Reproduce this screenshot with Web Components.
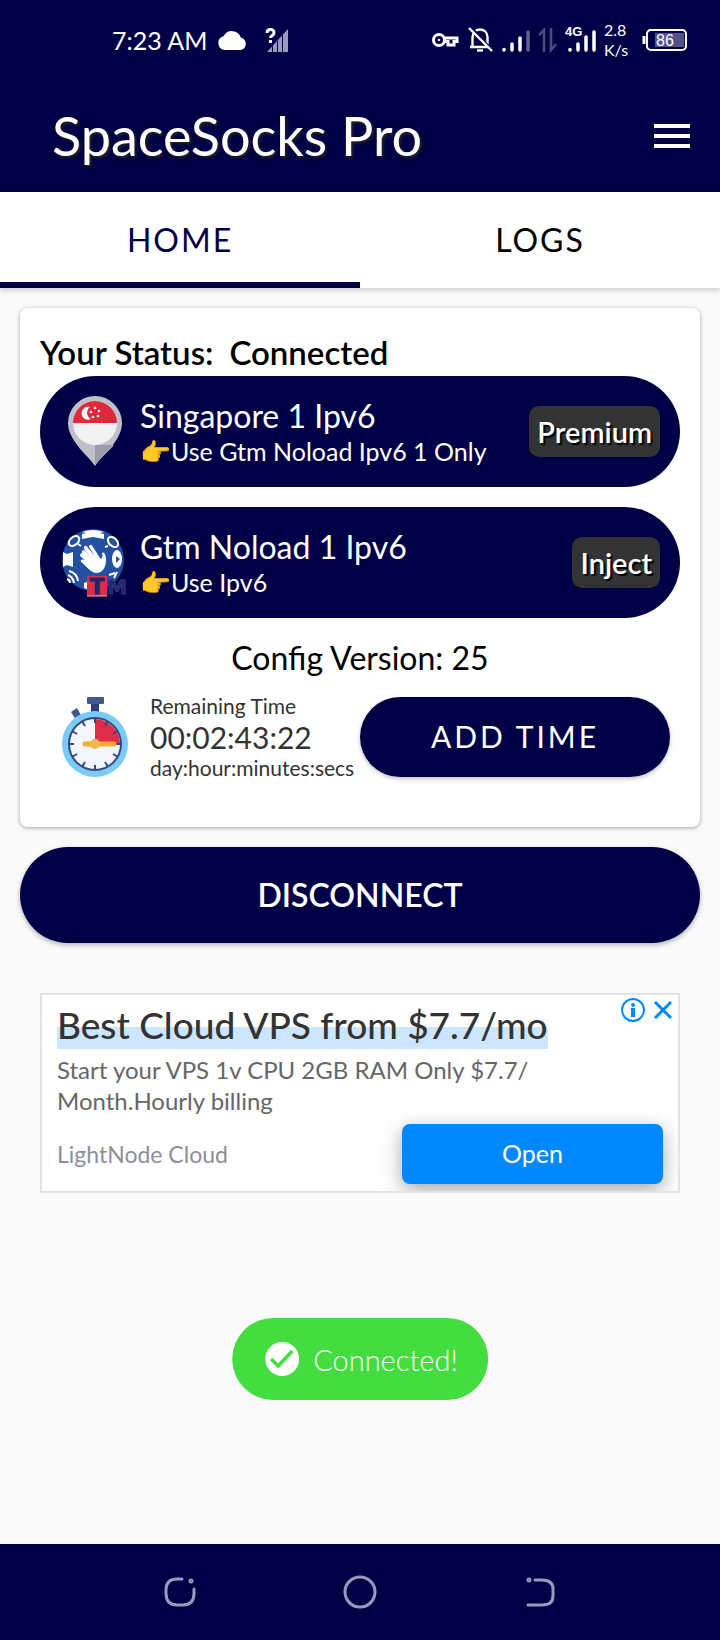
<!DOCTYPE html>
<html lang="en">
<head>
<meta charset="utf-8">
<meta name="viewport" content="width=device-width, initial-scale=1">
<title>SpaceSocks Pro</title>
<style>
    :root {
        --navy: #000047;
        --page: #fafafa;
    }
    body {
        margin: 0;
        background: var(--page);
        font-family: Lato, "Open Sans", sans-serif;
        color: #000;
    }
</style>
</head>
<body>
<space-app></space-app>

<script>
// Shared by every component: open shadow root filled from a markup string
class BaseElement extends HTMLElement {
    connectedCallback() {
        if (this.shadowRoot) return;
        this.attachShadow({ mode: 'open' });
        this.shadowRoot.innerHTML = this.template();
    }
}

// Android status bar
class PhoneStatus extends BaseElement {
    template() {
        return `
            <style>
                :host {
                    display: flex;
                    align-items: center;
                    justify-content: space-between;
                    height: 80px;
                    padding: 0 32px 0 112px;
                    background: var(--navy);
                    color: #fff;
                }
                .side { display: flex; align-items: center; }
                .time { font-size: 25px; margin-right: 10px; }
                .cloud { margin-right: 18px; }
                .right { gap: 7px; }
                .rate { font-size: 16px; line-height: 20px; width: 31px; }
                svg { display: block; }
                svg text { font-family: "Liberation Sans", sans-serif; }
            </style>
            <div class="side">
                <span class="time">7:23 AM</span>
                <svg class="cloud" width="30" height="22" viewBox="0 0 30 22" fill="#fff"><path d="M7.500 21A7 7 0 0 1 6.500 7.300A9.500 9.500 0 0 1 24 8.700A6.300 6.300 0 0 1 23.700 21Z"/></svg>
                <svg width="26" height="26" viewBox="0 0 26 26">
                    <path d="M2 25L23 2V25Z" fill="#9a9ac0"/>
                    <path d="M7.500 19V25M12.500 14V25M17.500 8V25" stroke="#000047"/>
                    <path d="M2 6C2 1.500 9 1.500 9 5.500C9 9 5.500 8.500 5.500 12M5.500 14V17" fill="none" stroke="#000047" stroke-width="6"/>
                    <path d="M2 6C2 1.500 9 1.500 9 5.500C9 9 5.500 8.500 5.500 11M5.500 13V16" fill="none" stroke="#fff" stroke-width="3"/>
                </svg>
            </div>
            <div class="side right">
                <svg width="28" height="16" viewBox="0 0 28 16" fill="none" stroke="#fff" stroke-width="3"><circle cx="8" cy="8" r="5.500"/><circle cx="8" cy="8" r="1.300" fill="#fff" stroke="none"/><path d="M13 6H26V9.500H23V13H17V9.500H13"/></svg>
                <svg width="28" height="28" viewBox="0 0 28 28" fill="none" stroke="#fff" stroke-width="2.400"><path d="M4 21H24M6.500 21V11C7 1 21 1 21.500 11V21"/><path d="M11 24.500H17"/><path d="M5 1L28 26" stroke="#000047"/><path d="M3 2L26 25"/></svg>
                <svg width="30" height="28" viewBox="0 0 30 28" stroke="#fff" stroke-width="3.500" stroke-linecap="round"><path d="M3 23.500V24M11 18V24M19 12V24"/><path d="M27 6V24" stroke="#62628f"/></svg>
                <svg width="20" height="26" viewBox="0 0 20 26" fill="none" stroke="#4b4b7d" stroke-width="2.500"><path d="M6 25V3L1 8M13 1V23L18 17"/></svg>
                <svg width="32" height="32" viewBox="0 0 32 32" stroke="#fff" stroke-width="3.500" stroke-linecap="round"><path d="M5 25.500V26M13 20V26M21 13V26M29 8V26"/><text x="0" y="12" font-size="13" font-weight="700" fill="#fff" stroke="none">4G</text></svg>
                <div class="rate">2.8<br>K/s</div>
                <svg width="46" height="24" viewBox="0 0 46 24"><rect x="5" y="2" width="39" height="20" rx="4" fill="none" stroke="#fff" stroke-width="2"/><path d="M2 8V16" stroke="#fff" stroke-width="3"/><rect x="13" y="5" width="29" height="14" fill="#53538a"/><text x="14" y="18" font-size="16" fill="#fff">86</text></svg>
            </div>
        `;
    }
}

class AppHeader extends BaseElement {
    template() {
        return `
            <style>
                :host {
                    display: flex;
                    align-items: center;
                    justify-content: space-between;
                    height: 112px;
                    padding: 0 24px 0 52px;
                    background: var(--navy);
                    color: #fff;
                }
                h1 {
                    margin: 0;
                    font-size: 54px;
                    line-height: 64px;
                    font-weight: 400;
                    text-shadow: 2px 2px 3px #222;
                }
                button {
                    padding: 0 6px;
                    border: 0;
                    background: none;
                    color: #fff;
                }
                svg { display: block; }
            </style>
            <h1><slot></slot></h1>
            <button aria-label="Menu">
                <svg width="36" height="24" viewBox="0 0 36 24" fill="currentColor"><path d="M0 0H36V4H0ZM0 10H36V14H0ZM0 20H36V24H0Z"/></svg>
            </button>
        `;
    }
}

class TabBar extends BaseElement {
    template() {
        return `
            <style>
                :host {
                    display: flex;
                    background: #fff;
                    box-shadow: 0 2px 6px rgba(0,0,0,0.2);
                }
                button {
                    flex: 1;
                    height: 96px;
                    padding: 4px 0 0;
                    border: 0;
                    border-bottom: 6px solid transparent;
                    background: none;
                    font: inherit;
                    font-size: 32px;
                    letter-spacing: 2px;
                    color: #000;
                }
                button[aria-selected="true"] {
                    color: var(--navy);
                    border-color: var(--navy);
                }
            </style>
            <button role="tab" aria-selected="true">HOME</button>
            <button role="tab" aria-selected="false">LOGS</button>
        `;
    }
}

// One pill: icon, title, note and a tag on the right
class ServerRow extends BaseElement {
    template() {
        return `
            <style>
                :host {
                    display: flex;
                    align-items: center;
                    height: 111px;
                    padding: 0 20px;
                    border-radius: 56px;
                    background: var(--navy);
                    color: #fff;
                }
                .icon { width: 68px; margin-right: 12px; }
                .text { flex: 1; }
                .title { font-size: 32px; line-height: 38px; }
                .note { display: flex; align-items: center; font-size: 25px; line-height: 32px; }
                .tag {
                    padding: 0 8px;
                    border-radius: 10px;
                    background: #333;
                    font-size: 29px;
                    line-height: 51px;
                    font-weight: 600;
                    text-shadow: 2px 2px 1px #000;
                }
            </style>
            <div class="icon"><slot name="icon"></slot></div>
            <div class="text">
                <div class="title"><slot></slot></div>
                <div class="note"><slot name="note"></slot></div>
            </div>
            <div class="tag"><slot name="tag"></slot></div>
        `;
    }
}

class PinIcon extends BaseElement {
    template() {
        return `
            <style>:host, svg { display: block; }</style>
            <svg width="68" height="72" viewBox="0 0 68 72">
                <path d="M35 70C31 62 8 46 8 27A27 27 0 0 1 62 27C62 46 39 62 35 70Z" fill="#c0c0cb"/>
                <path d="M35 70V49H54C48 57 37 64 35 70Z" fill="#9c9cac"/>
                <circle cx="35" cy="27" r="22" fill="#f2f2f2"/>
                <path d="M13 27A22 22 0 0 1 57 27Z" fill="#e0283c"/>
                <path d="M30 11A6.500 6.500 0 1 0 31 23A7 7 0 0 1 30 11Z" fill="#fff"/>
                <g fill="#fff"><circle cx="35" cy="12" r="1.300"/><circle cx="39" cy="15" r="1.300"/><circle cx="38" cy="20" r="1.300"/><circle cx="33" cy="21" r="1.300"/><circle cx="31" cy="16" r="1.300"/></g>
            </svg>
        `;
    }
}

class GlobeIcon extends BaseElement {
    template() {
        return `
            <style>
                :host, svg { display: block; }
                text { font-family: "DejaVu Sans", sans-serif; font-weight: 700; }
            </style>
            <svg width="68" height="70" viewBox="0 0 68 70">
                <circle cx="33" cy="32" r="31" fill="#2450a2"/>
                <g fill="#fff">
                    <path d="M22 4Q33 0 44 4L40 5L44 6V11L33 9L22 11V6L26 5Z"/>
                    <path d="M3 24L7 26L13 24V39L7 37L3 39Z"/>
                    <ellipse cx="57" cy="31" rx="5" ry="9"/>
                    <path d="M24 55L29 53V62L24 60Z"/>
                    <path d="M22 25C21 22 24 21 26 24L31 30L24 21C23 17 27 17 28 20L35 28L29 19C29 16 32 16 33 19L40 30C42 32 43 28 42 25C44 23 46 27 46 31C46 38 44 44 37 45C30 45 27 38 21 34C20 31 23 31 26 33L20 28C20 26 21 25 22 25Z"/>
                </g>
                <g fill="none" stroke="#fff" stroke-width="2">
                    <ellipse cx="14" cy="13" rx="6" ry="4" transform="rotate(-40 14 13)"/>
                    <path d="M18 16L21 18"/>
                    <ellipse cx="53" cy="14" rx="6" ry="4" transform="rotate(45 53 14)"/>
                    <path d="M48 18L45 19M9 43Q17 45 18 53M8 47Q13 49 14 55M7 51Q10 52 10 55"/>
                    <path d="M49 47L55 45M54 50L57 44"/>
                </g>
                <path d="M56 28L60 31L56 35Z" fill="#2450a2"/>
                <rect x="27" y="48" width="20" height="20" fill="#e02b45"/>
                <path d="M27 68H47" stroke="#f0a0b0"/>
                <text x="37" y="66" font-size="21" text-anchor="middle" fill="#24246c" stroke="#24246c">T</text>
                <text x="57" y="66" font-size="20" text-anchor="middle" fill="#24246c" stroke="#35357e">M</text>
            </svg>
        `;
    }
}

class RemainingTime extends BaseElement {
    template() {
        return `
            <style>
                :host {
                    display: flex;
                    align-items: center;
                    height: 80px;
                    padding: 0 10px 0 20px;
                    color: #333;
                }
                svg { width: 70px; margin-right: 20px; }
                .text { flex: 1; white-space: nowrap; }
                .small { font-size: 21px; line-height: 26px; }
                .value { font-size: 30px; line-height: 36px; }
                button {
                    width: 310px;
                    height: 80px;
                    padding: 0 0 2px;
                    border: 0;
                    border-radius: 40px;
                    background: var(--navy);
                    box-shadow: 0 2px 4px rgba(0,0,0,0.25);
                    font: inherit;
                    font-size: 30px;
                    letter-spacing: 3px;
                    color: #fff;
                }
            </style>
            <svg height="80" viewBox="0 0 70 80">
                <path d="M31 4H39V18H31Z" fill="#2f4278"/>
                <rect x="27" y="0" width="17" height="7" rx="1" fill="#43588f"/>
                <path d="M11 15L17 11L22 20L16 23Z" fill="#43588f"/>
                <circle cx="35" cy="47" r="33" fill="#7accf5"/>
                <circle cx="35" cy="47" r="26" fill="#f3f6fd" stroke="#35477c" stroke-width="2"/>
                <path d="M35 47V22A25 25 0 0 1 60 47Z" fill="#e02c48"/>
                <path d="M35 21V26M35 68V73M9 47H14M56 47H61M22 24L25 29M48 24L45 29M22 70L25 65M48 70L45 65M12 34L17 37M58 34L53 37M12 60L17 57M58 60L53 57" stroke="#35477c" stroke-width="2"/>
                <path d="M25 47H54" stroke="#f5ac2e" stroke-width="5" stroke-linecap="round"/>
                <circle cx="35" cy="47" r="5" fill="#efb94c"/>
            </svg>
            <div class="text">
                <div class="small">Remaining Time</div>
                <div class="value">00:02:43:22</div>
                <div class="small">day:hour:minutes:secs</div>
            </div>
            <button>ADD TIME</button>
        `;
    }
}

class StatusCard extends BaseElement {
    template() {
        return `
            <style>
                :host {
                    display: block;
                    padding: 24px 20px 50px;
                    border-radius: 8px;
                    background: #fff;
                    box-shadow: 0 1px 4px rgba(0,0,0,0.35);
                }
                .status {
                    display: flex;
                    gap: 16px;
                    font-size: 33px;
                    line-height: 40px;
                    font-weight: 600;
                    margin-bottom: 4px;
                }
                server-row { margin-bottom: 20px; }
                .version {
                    font-size: 32px;
                    line-height: 40px;
                    text-align: center;
                    margin-bottom: 19px;
                }
            </style>
            <div class="status"><span>Your Status:</span><span>Connected</span></div>
            <server-row>
                <pin-icon slot="icon"></pin-icon>
                Singapore 1 Ipv6
                <span slot="note">👉Use Gtm Noload Ipv6 1 Only</span>
                <span slot="tag">Premium</span>
            </server-row>
            <server-row>
                <globe-icon slot="icon"></globe-icon>
                Gtm Noload 1 Ipv6
                <span slot="note">👉Use Ipv6</span>
                <span slot="tag">Inject</span>
            </server-row>
            <div class="version">Config Version: 25</div>
            <remaining-time></remaining-time>
        `;
    }
}

class ConnectButton extends BaseElement {
    template() {
        return `
            <style>
                :host { display: block; }
                button {
                    display: block;
                    width: 100%;
                    height: 96px;
                    padding: 0 0 2px;
                    border: 0;
                    border-radius: 48px;
                    background: var(--navy);
                    box-shadow: 0 2px 5px rgba(0,0,0,0.3);
                    font: inherit;
                    font-size: 32px;
                    font-weight: 600;
                    color: #fff;
                }
            </style>
            <button><slot></slot></button>
        `;
    }
}

class AdBanner extends BaseElement {
    template() {
        return `
            <style>
                :host {
                    display: block;
                    box-sizing: border-box;
                    position: relative;
                    height: 200px;
                    padding: 12px 15px 0;
                    border: 2px solid #e3e3e3;
                    background: #fff;
                    overflow: hidden;
                }
                h2 {
                    display: inline-block;
                    margin: 0 0 5px;
                    padding-bottom: 6px;
                    font-size: 37px;
                    line-height: 36px;
                    font-weight: 500;
                    color: #333;
                    background: linear-gradient(transparent 20px, #cce6ff 20px);
                }
                p {
                    margin: 0;
                    max-width: 500px;
                    font-size: 24px;
                    line-height: 31px;
                    color: #666;
                }
                .foot {
                    display: flex;
                    align-items: center;
                    justify-content: space-between;
                    margin-top: 8px;
                    font-size: 23px;
                    color: #8e8e99;
                }
                .open {
                    width: 261px;
                    height: 60px;
                    padding: 0 0 2px;
                    border: 0;
                    border-radius: 8px;
                    background: #08f;
                    box-shadow: 0 6px 20px rgba(0,0,0,0.35);
                    font: inherit;
                    font-size: 25px;
                    color: #fff;
                }
                .choices {
                    position: absolute;
                    top: 2px;
                    right: 4px;
                    display: flex;
                    gap: 6px;
                }
                .choices button { padding: 0; border: 0; background: none; }
                svg { display: block; }
            </style>
            <h2>Best Cloud VPS from $7.7/mo</h2>
            <p>Start your VPS 1v CPU 2GB RAM Only $7.7/<br>Month.Hourly billing</p>
            <div class="foot">
                <span>LightNode Cloud</span>
                <button class="open">Open</button>
            </div>
            <div class="choices">
                <button aria-label="Ad info"><svg width="26" height="26" viewBox="0 0 26 26"><circle cx="13" cy="13" r="11" fill="none" stroke="#08f" stroke-width="2"/><circle cx="13" cy="8" r="2" fill="#08f"/><path d="M13 11V20" stroke="#08f" stroke-width="4"/></svg></button>
                <button aria-label="Close ad"><svg width="22" height="26" viewBox="0 0 22 26"><path d="M3 5L19 21M19 5L3 21" stroke="#08f" stroke-width="3"/></svg></button>
            </div>
        `;
    }
}

// Floats over the page, centred above the navigation bar
class ToastMessage extends BaseElement {
    template() {
        return `
            <style>
                :host {
                    position: fixed;
                    bottom: 240px;
                    left: 50%;
                    transform: translateX(-50%);
                    display: flex;
                    align-items: center;
                    gap: 14px;
                    height: 82px;
                    padding: 0 30px 0 33px;
                    border-radius: 41px;
                    background: #43dd40;
                    font-size: 29px;
                    font-weight: 300;
                    color: #fff;
                }
            </style>
            <svg width="34" height="34" viewBox="0 0 34 34"><circle cx="17" cy="17" r="17" fill="#fff"/><path d="M6 17L13 24L27 9" fill="none" stroke="#43dd40" stroke-width="3.500"/></svg>
            <span><slot></slot></span>
        `;
    }
}

class NavKeys extends BaseElement {
    template() {
        return `
            <style>
                :host {
                    display: flex;
                    align-items: center;
                    height: 96px;
                    padding: 0 90px;
                    background: var(--navy);
                }
                button { flex: 1; padding: 0; border: 0; background: none; }
                svg { display: block; margin: 0 auto; fill: none; stroke: #9a9abc; stroke-width: 3; stroke-linecap: round; }
            </style>
            <button aria-label="Recents"><svg width="36" height="36" viewBox="0 0 36 36"><path d="M20 5H15Q4 5 4 16V19Q4 31 15 31H21Q32 31 32 19V15"/><circle cx="29" cy="7" r="1"/></svg></button>
            <button aria-label="Home"><svg width="36" height="36" viewBox="0 0 36 36"><circle cx="18" cy="18" r="15"/></svg></button>
            <button aria-label="Back"><svg width="36" height="36" viewBox="0 0 36 36"><path d="M13 6H20Q31 6 31 15V22Q31 31 20 31H6"/><circle cx="7" cy="6" r="1"/></svg></button>
        `;
    }
}

class SpaceApp extends BaseElement {
    template() {
        return `
            <style>
                :host {
                    display: flex;
                    flex-direction: column;
                    min-height: 100vh;
                }
                main { flex: 1; padding: 20px; }
                connect-button { margin-top: 20px; }
                ad-banner { margin: 50px 20px 0; }
            </style>
            <phone-status></phone-status>
            <app-header>SpaceSocks Pro</app-header>
            <tab-bar role="tablist"></tab-bar>
            <main>
                <status-card></status-card>
                <connect-button>DISCONNECT</connect-button>
                <ad-banner></ad-banner>
            </main>
            <toast-message role="status">Connected!</toast-message>
            <nav-keys></nav-keys>
        `;
    }
}

customElements.define('phone-status', PhoneStatus);
customElements.define('app-header', AppHeader);
customElements.define('tab-bar', TabBar);
customElements.define('server-row', ServerRow);
customElements.define('pin-icon', PinIcon);
customElements.define('globe-icon', GlobeIcon);
customElements.define('remaining-time', RemainingTime);
customElements.define('status-card', StatusCard);
customElements.define('connect-button', ConnectButton);
customElements.define('ad-banner', AdBanner);
customElements.define('toast-message', ToastMessage);
customElements.define('nav-keys', NavKeys);
customElements.define('space-app', SpaceApp);
</script>
</body>
</html>
